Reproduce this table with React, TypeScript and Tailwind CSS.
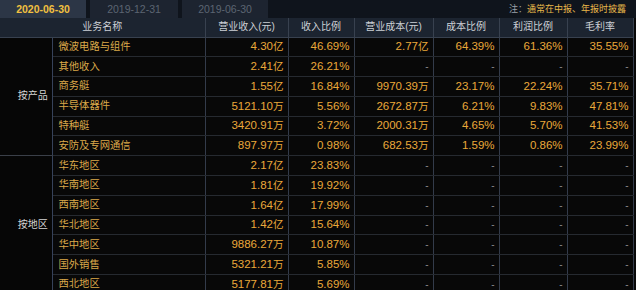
import React from 'react';

interface Row {
  name: string;
  revenue: string;
  revRatio: string;
  cost: string;
  costRatio: string;
  profitRatio: string;
  margin: string;
}

const products: Row[] = [
  { name: '微波电路与组件', revenue: '4.30亿', revRatio: '46.69%', cost: '2.77亿', costRatio: '64.39%', profitRatio: '61.36%', margin: '35.55%' },
  { name: '其他收入', revenue: '2.41亿', revRatio: '26.21%', cost: '-', costRatio: '-', profitRatio: '-', margin: '-' },
  { name: '商务艇', revenue: '1.55亿', revRatio: '16.84%', cost: '9970.39万', costRatio: '23.17%', profitRatio: '22.24%', margin: '35.71%' },
  { name: '半导体器件', revenue: '5121.10万', revRatio: '5.56%', cost: '2672.87万', costRatio: '6.21%', profitRatio: '9.83%', margin: '47.81%' },
  { name: '特种艇', revenue: '3420.91万', revRatio: '3.72%', cost: '2000.31万', costRatio: '4.65%', profitRatio: '5.70%', margin: '41.53%' },
  { name: '安防及专网通信', revenue: '897.97万', revRatio: '0.98%', cost: '682.53万', costRatio: '1.59%', profitRatio: '0.86%', margin: '23.99%' },
];

const regions: Row[] = [
  { name: '华东地区', revenue: '2.17亿', revRatio: '23.83%', cost: '-', costRatio: '-', profitRatio: '-', margin: '-' },
  { name: '华南地区', revenue: '1.81亿', revRatio: '19.92%', cost: '-', costRatio: '-', profitRatio: '-', margin: '-' },
  { name: '西南地区', revenue: '1.64亿', revRatio: '17.99%', cost: '-', costRatio: '-', profitRatio: '-', margin: '-' },
  { name: '华北地区', revenue: '1.42亿', revRatio: '15.64%', cost: '-', costRatio: '-', profitRatio: '-', margin: '-' },
  { name: '华中地区', revenue: '9886.27万', revRatio: '10.87%', cost: '-', costRatio: '-', profitRatio: '-', margin: '-' },
  { name: '国外销售', revenue: '5321.21万', revRatio: '5.85%', cost: '-', costRatio: '-', profitRatio: '-', margin: '-' },
  { name: '西北地区', revenue: '5177.81万', revRatio: '5.69%', cost: '-', costRatio: '-', profitRatio: '-', margin: '-' },
];

const cellBase = 'h-[19.8px] border-b border-r border-b-[#262a30] border-r-[#333b4a] px-[4px]';

// numbers with a trailing 亿/万 unit: the unit is drawn a bit smaller, like the CJK text
function Cell({ v }: { v: string }) {
  if (v === '-') {
    return (
      <td className={cellBase + ' text-right'}>
        <span className="text-[10px] text-[#8a8a8a]">-</span>
      </td>
    );
  }
  const unit = /[亿万]$/.test(v) ? v.slice(-1) : '';
  const num = unit ? v.slice(0, -1) : v;
  return (
    <td className={cellBase + ' text-right text-[#eaa93a]'}>
      {num}
      {unit && <span className="text-[10.5px]">{unit}</span>}
    </td>
  );
}

function Group({ label, rows }: { label: string; rows: Row[] }) {
  return (
    <>
      {rows.map((r, i) => (
        <tr key={r.name}>
          {i === 0 && (
            <td
              rowSpan={rows.length}
              className="border-b border-r border-b-[#3a3f48] border-r-[#36425a] bg-[#060606] pl-[14px] text-center text-[10px] text-[#d4d4d4]"
            >
              {label}
            </td>
          )}
          <td className={cellBase + ' pl-[6px] text-left text-[10.3px] text-[#dba84a]'}>{r.name}</td>
          <Cell v={r.revenue} />
          <Cell v={r.revRatio} />
          <Cell v={r.cost} />
          <Cell v={r.costRatio} />
          <Cell v={r.profitRatio} />
          <Cell v={r.margin} />
        </tr>
      ))}
    </>
  );
}

export default function App() {
  const heads = ['营业收入(元)', '收入比例', '营业成本(元)', '成本比例', '利润比例', '毛利率'];

  return (
    <div
      className="h-[290px] w-[636px] overflow-hidden bg-[#080808] text-[11.5px] leading-none"
      style={{ fontFamily: '"Liberation Sans", "Noto Sans CJK SC", sans-serif' }}
    >
      <div className="flex h-[18px] items-stretch bg-[#0f141c] text-[10.5px]">
        <div className="mr-[4px] flex w-[86px] items-center justify-center bg-[#2c3646] font-bold text-[#f2c040]">
          2020-06-30
        </div>
        <div className="mr-[4px] flex w-[88px] items-center justify-center bg-[#1d2430] text-[#5c6472]">
          2019-12-31
        </div>
        <div className="flex w-[86px] items-center justify-center bg-[#1d2430] text-[#5c6472]">
          2019-06-30
        </div>
        <div className="flex-1" />
        <div className="flex items-center pr-[10px] text-[9px]">
          <span className="text-[#9aa0a8]">注：</span>
          <span className="text-[#e8b84a]">通常在中报、年报时披露</span>
        </div>
      </div>

      <table className="w-[633px] table-fixed border-collapse">
        <colgroup>
          <col className="w-[52px]" />
          <col className="w-[153px]" />
          <col className="w-[83px]" />
          <col className="w-[66px]" />
          <col className="w-[79px]" />
          <col className="w-[66px]" />
          <col className="w-[68px]" />
          <col className="w-[66px]" />
        </colgroup>
        <thead>
          <tr className="h-[19px] bg-[#1c2430] text-[10px] text-[#ccd0d6]">
            <th colSpan={2} className="border-r border-b border-[#38414f] font-normal">
              业务名称
            </th>
            {heads.map((h) => (
              <th key={h} className="border-r border-b border-[#38414f] font-normal">
                {h}
              </th>
            ))}
          </tr>
        </thead>
        <tbody>
          <Group label="按产品" rows={products} />
          <Group label="按地区" rows={regions} />
        </tbody>
      </table>
    </div>
  );
}
